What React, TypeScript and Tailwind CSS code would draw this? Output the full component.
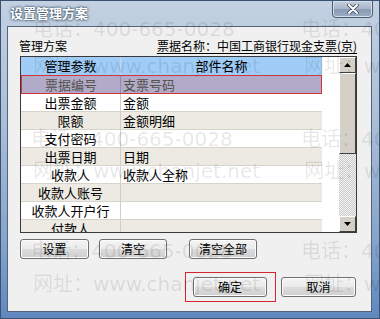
import React from "react";

const cjk = { fontFamily: '"Noto Sans CJK SC", "Noto Sans", sans-serif' };

const rows: { a: string; b: string }[] = [
  { a: "票据编号", b: "支票号码" },
  { a: "出票金额", b: "金额" },
  { a: "限额", b: "金额明细" },
  { a: "支付密码", b: "" },
  { a: "出票日期", b: "日期" },
  { a: "收款人", b: "收款人全称" },
  { a: "收款人账号", b: "" },
  { a: "收款人开户行", b: "" },
  { a: "付款人", b: "" },
];

function Btn({ label, w }: { label: string; w: string }) {
  return (
    <button
      className={`${w} block shrink-0 h-[20px] rounded-[3px] border border-[#707070] bg-[linear-gradient(to_bottom,#f4f4f4_0%,#ebebeb_48%,#dcdcdc_52%,#cfcfcf_100%)] shadow-[inset_0_0_0_1px_#fcfcfc] text-[12px] leading-[18px] text-black`}
      style={cjk}
    >
      {label}
    </button>
  );
}

const marks: { t: string; x: number; y: number }[] = [
  { t: "电话：400-665-0028", x: 32, y: 16 },
  { t: "电话：400-665-0028", x: 300, y: 16 },
  { t: "网址：www.chanjet.net", x: 32, y: 53 },
  { t: "网址：www.chanjet.net", x: 303, y: 53 },
  { t: "电话：400-665-0028", x: 30, y: 126 },
  { t: "电话：400-665-0028", x: 300, y: 126 },
  { t: "网址：www.chanjet.net", x: 32, y: 158 },
  { t: "网址：www.chanjet.net", x: 303, y: 158 },
  { t: "电话：400-665-0028", x: 30, y: 238 },
  { t: "电话：400-665-0028", x: 300, y: 238 },
  { t: "网址：www.chanjet.net", x: 32, y: 271 },
  { t: "网址：www.chanjet.net", x: 303, y: 271 },
];

export default function App() {
  return (
    <div
      className="relative w-[380px] h-[319px] overflow-hidden flex flex-col pl-[6px] pr-[7px] pb-[6px] border border-[#3b5272] bg-[linear-gradient(to_bottom,#c3d1e1_0%,#adc0d7_35%,#86a5cb_75%,#5f88c0_100%)]"
      style={cjk}
    >
      {/* title bar */}
      <div className="h-[25px] flex items-start justify-between shrink-0">
        <div className="pl-[3px] pt-[3px] text-[13px] font-bold leading-[18px] text-white [text-shadow:0_0_3px_#33485f,0_0_2px_#33485f]">
          设置管理方案
        </div>
        <div className="mr-[-1px] mt-[-1px] w-[41px] h-[18px] rounded-b-[4px] border border-[#4a5a70] bg-[linear-gradient(to_bottom,#c4cfdc_0%,#a6b5c8_50%,#8a9cb3_52%,#9aacc2_100%)] flex items-center justify-center shadow-[inset_0_0_0_1px_#d6dee8]">
          <svg width="12" height="10" viewBox="0 0 12 10">
            <path d="M2 1 L10 9 M10 1 L2 9" stroke="#3d4b5e" strokeWidth="3.6" strokeLinecap="round" />
            <path d="M2 1 L10 9 M10 1 L2 9" stroke="#ffffff" strokeWidth="2" strokeLinecap="round" />
          </svg>
        </div>
      </div>

      {/* client */}
      <div className="flex-1 border border-[#53657d] bg-[#f0f0f0] flex flex-col">
        <div className="mt-[11px] h-[16px] flex justify-between pl-[11px] pr-[14px] text-[12px] leading-[16px] text-black">
          <span>管理方案</span>
          <span className="underline underline-offset-2">票据名称：中国工商银行现金支票(京)</span>
        </div>

        {/* table */}
        <div className="mt-[2px] ml-[12px] w-[337px] h-[177px] shrink-0 border border-[#3a3a3a] bg-white flex">
          <div className="w-[301px] h-[175px] overflow-hidden flex flex-col">
            <div className="h-[18px] shrink-0 flex bg-[#9fcdf8] text-[13px] leading-[18px] text-black">
              <div className="w-[100px] text-center border-r border-[#c8d8e8]">管理参数</div>
              <div className="flex-1 text-center">部件名称</div>
            </div>
            {rows.map((r, i) => {
              const sel = i === 0;
              const gray = i % 2 === 0;
              return (
                <div
                  key={i}
                  className={`shrink-0 flex text-[13px] leading-[17px] ${
                    sel
                      ? "h-[19px] border border-[#d2343c] bg-[#b1aac9] text-[#55524a]"
                      : `h-[18px] border-b border-[#d6d4cb] text-black ${gray ? "bg-[#eceae2]" : "bg-white"}`
                  }`}
                >
                  <div className={`${sel ? "w-[99px] border-r border-[#8c88c0]" : "w-[100px] border-r border-[#d0cec6]"} text-center`}>
                    {r.a}
                  </div>
                  <div className="flex-1 pl-[2px]">{r.b}</div>
                </div>
              );
            })}
          </div>
          <div className="w-[17px] h-[175px] bg-white" />
          {/* scrollbar */}
          <div className="w-[17px] h-[175px] flex flex-col">
            <div className="h-[16px] shrink-0 bg-[#d4d0c8] border border-t-white border-l-white border-r-[#404040] border-b-[#404040] flex items-center justify-center">
              <svg width="7" height="4" viewBox="0 0 7 4">
                <path d="M3.5 0 L7 4 L0 4 Z" fill="#000" />
              </svg>
            </div>
            <div className="h-[81px] shrink-0 bg-[#d4d0c8] border border-t-white border-l-white border-r-[#404040] border-b-[#404040]" />
            <div className="flex-1 bg-[repeating-conic-gradient(#f4f4f4_0_25%,#c9c9c9_0_50%)] bg-[length:2px_2px]" />
            <div className="h-[16px] shrink-0 bg-[#d4d0c8] border border-t-white border-l-white border-r-[#404040] border-b-[#404040] flex items-center justify-center">
              <svg width="7" height="4" viewBox="0 0 7 4">
                <path d="M0 0 L7 0 L3.5 4 Z" fill="#000" />
              </svg>
            </div>
          </div>
        </div>

        {/* action buttons */}
        <div className="mt-[6px] ml-[12px] h-[20px] flex items-center gap-[10px]">
          <Btn label="设置" w="w-[69px]" />
          <Btn label="清空" w="w-[68px]" />
          <div className="w-[2px]" />
          <Btn label="清空全部" w="w-[68px]" />
        </div>

        {/* confirm row */}
        <div className="mt-[18px] h-[20px] flex justify-end pr-[15px] gap-[14px]">
          <div className="relative flex">
            <Btn label="确定" w="w-[74px]" />
            <div className="absolute left-[-8px] right-[-9px] top-[-5px] bottom-[-5px] border border-[#d8242c]" />
          </div>
          <Btn label="取消" w="w-[75px]" />
        </div>
      </div>

      {/* watermarks */}
      {marks.map((m, i) => (
        <div
          key={i}
          className="pointer-events-none absolute whitespace-nowrap text-[20px] leading-[24px] text-[rgba(0,0,0,0.1)]"
          style={{ left: m.x, top: m.y, fontFamily: '"DejaVu Sans", "Noto Sans CJK SC", sans-serif' }}
        >
          {m.t}
        </div>
      ))}
    </div>
  );
}
